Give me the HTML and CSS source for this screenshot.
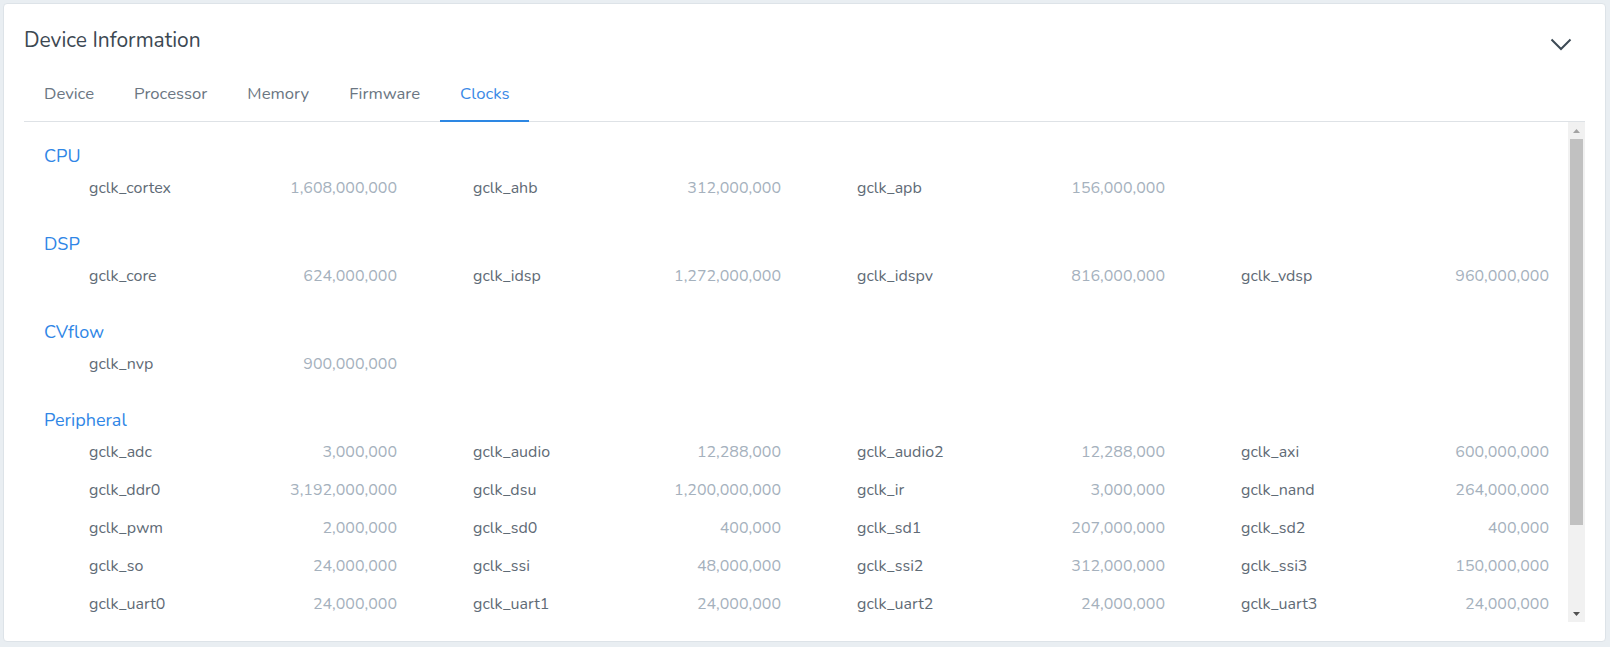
FILE: index.html
```html
<!DOCTYPE html>
<html lang="en">
<head>
<meta charset="utf-8">
<title>Device Information</title>
<link rel="stylesheet" href="styles.css">
</head>
<body>
<div class="card">
  <div class="card-body">
    <div class="card-header">
      <h2 class="title">Device Information</h2>
      <svg class="chevron" width="22" height="13" viewBox="0 0 22 13"><polyline points="1.5,1.5 11,11 20.5,1.5" fill="none" stroke="#3d4a55" stroke-width="2"/></svg>
    </div>
    <div class="tabs">
      <div class="tab">Device</div>
      <div class="tab">Processor</div>
      <div class="tab">Memory</div>
      <div class="tab">Firmware</div>
      <div class="tab active">Clocks</div>
    </div>
    <div class="panel">
      <div class="scroll">
        <section class="group">
          <h3 class="group-title">CPU</h3>
          <div class="grid">
            <div class="cell"><span class="k">gclk_cortex</span><span class="v">1,608,000,000</span></div>
            <div class="cell"><span class="k">gclk_ahb</span><span class="v">312,000,000</span></div>
            <div class="cell"><span class="k">gclk_apb</span><span class="v">156,000,000</span></div>
          </div>
        </section>
        <section class="group">
          <h3 class="group-title">DSP</h3>
          <div class="grid">
            <div class="cell"><span class="k">gclk_core</span><span class="v">624,000,000</span></div>
            <div class="cell"><span class="k">gclk_idsp</span><span class="v">1,272,000,000</span></div>
            <div class="cell"><span class="k">gclk_idspv</span><span class="v">816,000,000</span></div>
            <div class="cell"><span class="k">gclk_vdsp</span><span class="v">960,000,000</span></div>
          </div>
        </section>
        <section class="group">
          <h3 class="group-title">CVflow</h3>
          <div class="grid">
            <div class="cell"><span class="k">gclk_nvp</span><span class="v">900,000,000</span></div>
          </div>
        </section>
        <section class="group">
          <h3 class="group-title">Peripheral</h3>
          <div class="grid">
            <div class="cell"><span class="k">gclk_adc</span><span class="v">3,000,000</span></div>
            <div class="cell"><span class="k">gclk_audio</span><span class="v">12,288,000</span></div>
            <div class="cell"><span class="k">gclk_audio2</span><span class="v">12,288,000</span></div>
            <div class="cell"><span class="k">gclk_axi</span><span class="v">600,000,000</span></div>
            <div class="cell"><span class="k">gclk_ddr0</span><span class="v">3,192,000,000</span></div>
            <div class="cell"><span class="k">gclk_dsu</span><span class="v">1,200,000,000</span></div>
            <div class="cell"><span class="k">gclk_ir</span><span class="v">3,000,000</span></div>
            <div class="cell"><span class="k">gclk_nand</span><span class="v">264,000,000</span></div>
            <div class="cell"><span class="k">gclk_pwm</span><span class="v">2,000,000</span></div>
            <div class="cell"><span class="k">gclk_sd0</span><span class="v">400,000</span></div>
            <div class="cell"><span class="k">gclk_sd1</span><span class="v">207,000,000</span></div>
            <div class="cell"><span class="k">gclk_sd2</span><span class="v">400,000</span></div>
            <div class="cell"><span class="k">gclk_so</span><span class="v">24,000,000</span></div>
            <div class="cell"><span class="k">gclk_ssi</span><span class="v">48,000,000</span></div>
            <div class="cell"><span class="k">gclk_ssi2</span><span class="v">312,000,000</span></div>
            <div class="cell"><span class="k">gclk_ssi3</span><span class="v">150,000,000</span></div>
            <div class="cell"><span class="k">gclk_uart0</span><span class="v">24,000,000</span></div>
            <div class="cell"><span class="k">gclk_uart1</span><span class="v">24,000,000</span></div>
            <div class="cell"><span class="k">gclk_uart2</span><span class="v">24,000,000</span></div>
            <div class="cell"><span class="k">gclk_uart3</span><span class="v">24,000,000</span></div>
          </div>
        </section>
      </div>
      <div class="scrollbar">
        <div class="sb-btn">
          <svg width="7" height="4" viewBox="0 0 7 4"><polygon points="0,4 3.5,0 7,4" fill="#a3a3a3"/></svg>
        </div>
        <div class="sb-track"><div class="sb-thumb"></div></div>
        <div class="sb-btn">
          <svg width="7" height="4" viewBox="0 0 7 4"><polygon points="0,0 7,0 3.5,4" fill="#505050"/></svg>
        </div>
      </div>
    </div>
  </div>
</div>
</body>
</html>
```

FILE: styles.css
```css
* { box-sizing: border-box; }

html, body { margin: 0; }

body {
  background: #e9eef2;
  padding: 3px 4px 5px 3px;
  font-family: "Nunito", "Open Sans", "Noto Sans", sans-serif;
  color: #5f6b76;
}

.card {
  background: #fff;
  border: 1px solid #dde3e8;
  border-radius: 4px;
}

.card-body {
  padding: 22px 20px 19px 20px;
}

.card-header {
  display: flex;
  align-items: flex-start;
  justify-content: space-between;
  height: 28px;
}

.title {
  margin: 0;
  font-size: 21px;
  line-height: 28px;
  font-weight: 400;
  color: #3c4852;
}

.chevron {
  margin-top: 12px;
  margin-right: 13px;
  display: block;
}

.tabs {
  display: flex;
  margin-top: 16px;
  border-bottom: 1px solid #dee2e6;
}

.tab {
  padding: 12px 20px 14px;
  font-size: 16.7px;
  line-height: 24px;
  color: #6b7682;
  border-bottom: 2px solid transparent;
  margin-bottom: -1px;
}

.tab.active {
  color: #3b8ae6;
  border-bottom-color: #2d87e3;
}

.panel {
  display: flex;
  height: 500px;
}

.scroll {
  flex: 1;
  min-width: 0;
  overflow: hidden;
  padding: 22px 19px 0 20px;
}

.scrollbar {
  width: 17px;
  flex: none;
  display: flex;
  flex-direction: column;
  background: #f1f1f1;
}

.sb-btn {
  height: 17px;
  flex: none;
  display: flex;
  align-items: center;
  justify-content: center;
}

.sb-btn svg { display: block; }

.sb-track {
  flex: 1;
  padding: 0 2px;
}

.sb-thumb {
  height: 386px;
  background: #c1c1c1;
}

.group + .group {
  margin-top: 25px;
}

.group-title {
  margin: 0 0 1px;
  font-size: 18px;
  line-height: 24px;
  font-weight: 400;
  color: #2f86e6;
}

.grid {
  display: grid;
  grid-template-columns: repeat(4, 1fr);
  grid-auto-rows: 38px;
  column-gap: 76px;
  padding-left: 45px;
}

.cell {
  display: flex;
  align-items: center;
  justify-content: space-between;
  font-size: 16px;
  line-height: 24px;
}

.k {
  color: #5f6b76;
}

.v {
  color: #a5b1bd;
}
```
